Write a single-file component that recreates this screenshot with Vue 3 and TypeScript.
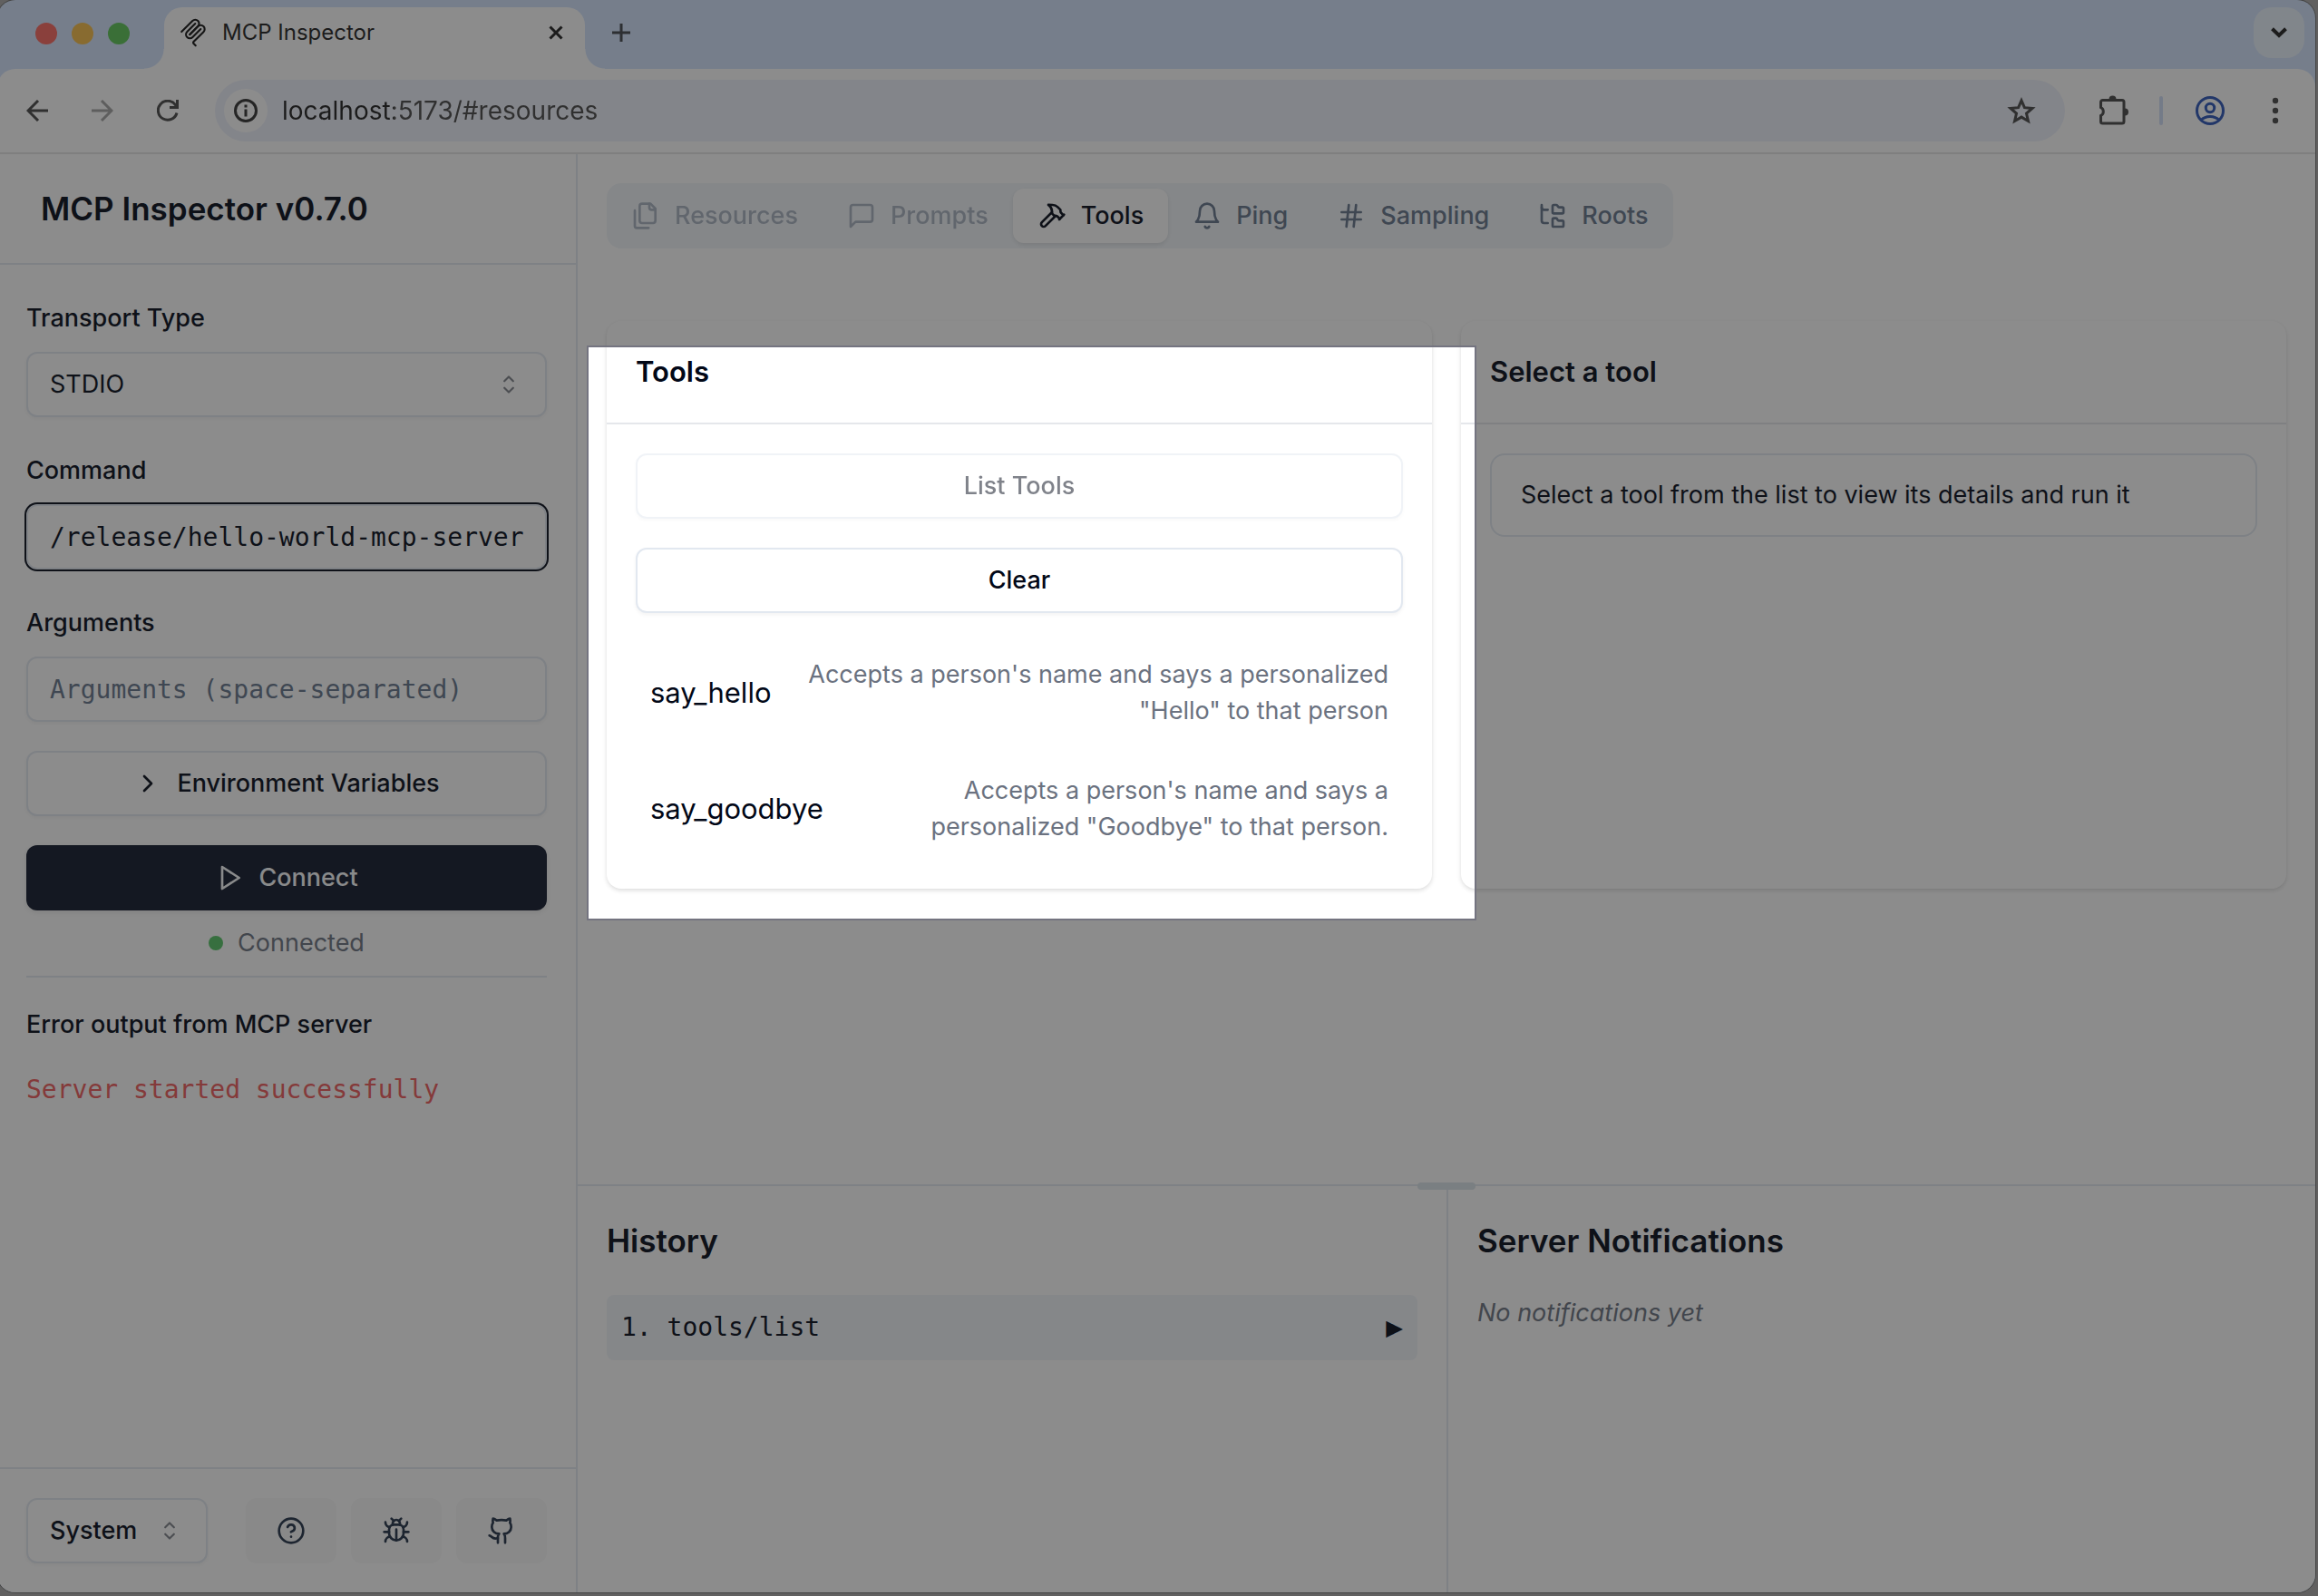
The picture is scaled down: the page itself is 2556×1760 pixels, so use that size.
<script setup lang="ts">
import { ref } from 'vue'

const icons: Record<string, string[]> = {
  files: [
    'M20 7h-3a2 2 0 0 1-2-2V2',
    'M9 18a2 2 0 0 1-2-2V4a2 2 0 0 1 2-2h7l4 4v10a2 2 0 0 1-2 2Z',
    'M3 7.6v12.8A1.6 1.6 0 0 0 4.6 22h9.8',
  ],
  message: ['M21 15a2 2 0 0 1-2 2H7l-4 4V5a2 2 0 0 1 2-2h14a2 2 0 0 1 2 2z'],
  hammer: [
    'm15 12-8.373 8.373a1 1 0 1 1-3-3L12 9',
    'm18 15 4-4',
    'm21.5 11.5-1.914-1.914A2 2 0 0 1 19 8.172V7l-2.26-2.26a6 6 0 0 0-4.202-1.756L9 2.96l.92.82A6.18 6.18 0 0 1 12 8.4V10l2 2h1.172a2 2 0 0 1 1.414.586L18.5 14.5',
  ],
  bell: ['M6 8a6 6 0 0 1 12 0c0 7 3 9 3 9H3s3-2 3-9', 'M10.3 21a1.94 1.94 0 0 0 3.4 0'],
  hash: ['M4 9h16', 'M4 15h16', 'M10 3 8 21', 'M16 3l-2 18'],
  tree: [
    'M20 10a1 1 0 0 0 1-1V6a1 1 0 0 0-1-1h-2.5a1 1 0 0 1-.8-.4l-.9-1.2A1 1 0 0 0 15 3h-2a1 1 0 0 0-1 1v5a1 1 0 0 0 1 1Z',
    'M20 21a1 1 0 0 0 1-1v-3a1 1 0 0 0-1-1h-2.9a1 1 0 0 1-.88-.55l-.42-.85a1 1 0 0 0-.92-.6H13a1 1 0 0 0-1 1v5a1 1 0 0 0 1 1Z',
    'M3 5a2 2 0 0 0 2 2h3',
    'M3 3v13a2 2 0 0 0 2 2h3',
  ],
  help: [
    'M12 2a10 10 0 1 0 0 20a10 10 0 1 0 0-20Z',
    'M9.09 9a3 3 0 0 1 5.83 1c0 2-3 3-3 3',
    'M12 17h.01',
  ],
  bug: [
    'm8 2 1.88 1.88',
    'M14.12 3.88 16 2',
    'M9 7.13v-1a3.003 3.003 0 1 1 6 0v1',
    'M12 20c-3.3 0-6-2.7-6-6v-3a4 4 0 0 1 4-4h4a4 4 0 0 1 4 4v3c0 3.3-2.7 6-6 6',
    'M12 20v-9',
    'M6.53 9C4.6 8.8 3 7.1 3 5',
    'M6 13H2',
    'M3 21c0-2.1 1.7-3.9 3.8-4',
    'M20.97 5c0 2.1-1.6 3.8-3.5 4',
    'M22 13h-4',
    'M17.2 17c2.1.1 3.8 1.9 3.8 4',
  ],
  github: [
    'M15 22v-4a4.8 4.8 0 0 0-1-3.5c3 0 6-2 6-5.5.08-1.25-.27-2.48-1-3.5.28-1.15.28-2.35 0-3.5 0 0-1 0-3 1.5-2.64-.5-5.36-.5-8 0C6 2 5 2 5 2c-.3 1.15-.3 2.35 0 3.5A5.403 5.403 0 0 0 4 9c0 3.5 3 5.5 6 5.5-.39.49-.68 1.05-.85 1.65-.17.6-.22 1.23-.15 1.85v4',
    'M9 18c-4.51 2-5-2-7-2',
  ],
}

interface Tab {
  label: string
  icon: string
  disabled: boolean
}
const tabs: Tab[] = [
  { label: 'Resources', icon: 'files', disabled: true },
  { label: 'Prompts', icon: 'message', disabled: true },
  { label: 'Tools', icon: 'hammer', disabled: false },
  { label: 'Ping', icon: 'bell', disabled: false },
  { label: 'Sampling', icon: 'hash', disabled: false },
  { label: 'Roots', icon: 'tree', disabled: false },
]
const activeTab = ref('Tools')

const tools = [
  { name: 'say_hello', description: 'Accepts a person\'s name and says a personalized "Hello" to that person' },
  { name: 'say_goodbye', description: 'Accepts a person\'s name and says a personalized "Goodbye" to that person.' },
]

const links = [
  { icon: 'help', label: 'Help' },
  { icon: 'bug', label: 'Debugging guide' },
  { icon: 'github', label: 'Report an issue' },
]

const url = ref('localhost:5173/#resources')
const transport = ref('STDIO')
const command = ref('/release/hello-world-mcp-server')
const args = ref('')
const theme = ref('System')
</script>

<template>
  <div class="desktop">
    <div class="window">
      <header class="tabstrip">
        <div class="lights">
          <span class="light red"></span>
          <span class="light yellow"></span>
          <span class="light green"></span>
        </div>
        <div class="browser-tab">
          <svg class="favicon" viewBox="0 0 180 180" fill="none" stroke="#111" stroke-width="12" stroke-linecap="round">
            <path d="M18 84.8528L85.8822 16.9706C95.2548 7.59798 110.451 7.59798 119.823 16.9706C129.196 26.3431 129.196 41.5391 119.823 50.9117L68.5581 102.177" />
            <path d="M69.2652 101.47L119.823 50.9117C129.196 41.5391 144.392 41.5391 153.765 50.9117L154.118 51.2652C163.491 60.6378 163.491 75.8338 154.118 85.2063L92.7248 146.6C89.6006 149.724 89.6006 154.789 92.7248 157.913L105.331 170.52" />
            <path d="M102.853 33.9411L52.6482 84.1457C43.2756 93.5183 43.2756 108.714 52.6482 118.087C62.0208 127.459 77.2167 127.459 86.5893 118.087L136.794 67.8822" />
          </svg>
          <span class="browser-title">MCP Inspector</span>
          <button class="bare" aria-label="Close tab">
            <svg width="16" height="16" viewBox="0 0 16 16" fill="none" stroke="#1f1f1f" stroke-width="3"><path d="M1.5 1.5l13 13M14.5 1.5l-13 13" /></svg>
          </button>
        </div>
        <button class="bare new-tab" aria-label="New tab">
          <svg width="20" height="20" viewBox="0 0 20 20" fill="none" stroke="#41444a" stroke-width="3"><path d="M10 0v20M0 10h20" /></svg>
        </button>
        <button class="bare tab-search" aria-label="Search tabs">
          <svg width="18" height="12" viewBox="0 0 18 12" fill="none" stroke="#1f1f1f" stroke-width="4"><path d="M1.5 1.8 9 9l7.5-7.2" /></svg>
        </button>
      </header>

      <div class="toolbar">
        <button class="bare nav" aria-label="Back">
          <svg width="24" height="24" viewBox="0 0 24 24" fill="none" stroke="#474747" stroke-width="3"><path d="M24 12H2M13 1 2 12l11 11" /></svg>
        </button>
        <button class="bare nav" aria-label="Forward" disabled>
          <svg width="24" height="24" viewBox="0 0 24 24" fill="none" stroke="#a3a3a3" stroke-width="3"><path d="M0 12h22M11 1l11 11-11 11" /></svg>
        </button>
        <button class="bare nav" aria-label="Reload">
          <svg width="24" height="24" viewBox="0 0 24 24" fill="none" stroke="#474747" stroke-width="3"><path d="M22 14.5A10.5 10.5 0 1 1 20.3 5.5L22 8M22.5 0v8.500H14" /></svg>
        </button>
        <div class="omnibox">
          <button class="bare site-info" aria-label="Site information">
            <svg width="26" height="26" viewBox="0 0 26 26" fill="none" stroke="#303030" stroke-width="3"><circle cx="13" cy="13" r="11.500" /><path d="M13 11.500v8M13 6.500v3" /></svg>
          </button>
          <input v-model="url" class="url" type="text" aria-label="Address" />
          <button class="bare" aria-label="Bookmark">
            <svg width="32" height="30" viewBox="0 0 32 30" fill="none" stroke="#474747" stroke-width="3"><path d="M16 3.800l3.400 7.900 8.600.75-6.500 5.650 1.950 8.400L16 22.100 8.550 26.500l1.950-8.400L4 12.450l8.600-.75Z" /></svg>
          </button>
        </div>
        <div class="actions">
          <button class="bare" aria-label="Extensions">
            <svg width="32" height="34" viewBox="0 0 32 34" fill="none" stroke="#474747" stroke-width="3">
              <path d="M3.500 5.500H25a2 2 0 0 1 2 2V29a2 2 0 0 1-2 2H3.500a2 2 0 0 1-2-2v-6.500a5 5 0 0 0 0-9V7.500a2 2 0 0 1 2-2Z" />
              <path d="M10.500 4.500a4 4 0 0 1 8 0ZM28 14.500a4 4 0 0 1 0 8Z" fill="#474747" stroke="none" />
            </svg>
          </button>
          <span class="divider"></span>
          <button class="bare" aria-label="Profile">
            <svg width="32" height="32" viewBox="0 0 32 32" fill="none" stroke="#2a54b8" stroke-width="3"><circle cx="16" cy="16" r="14.500" /><circle cx="16" cy="13" r="4.700" /><path d="M6 26.500c5-5.500 15-5.500 20 0" /></svg>
          </button>
          <button class="bare" aria-label="Menu">
            <svg width="8" height="30" viewBox="0 0 8 30" fill="#474747"><circle cx="4" cy="4" r="3.200" /><circle cx="4" cy="15" r="3.200" /><circle cx="4" cy="26" r="3.200" /></svg>
          </button>
        </div>
      </div>

      <div class="page">
        <aside class="sidebar">
          <h1 class="brand">MCP Inspector v0.7.0</h1>
          <form class="config" @submit.prevent>
            <div class="field">
              <label for="transport">Transport Type</label>
              <div class="select">
                <select id="transport" v-model="transport"><option>STDIO</option><option>SSE</option></select>
                <svg class="caret" viewBox="0 0 15 15"><path d="M5.250 5.750 7.500 3.500 9.750 5.750M5.250 9.250 7.500 11.500 9.750 9.250" /></svg>
              </div>
            </div>
            <div class="field">
              <label for="command">Command</label>
              <input id="command" v-model="command" class="input focused" type="text" />
            </div>
            <div class="field">
              <label for="arguments">Arguments</label>
              <input id="arguments" v-model="args" class="input" type="text" placeholder="Arguments (space-separated)" />
            </div>
            <button class="btn outline" type="button">
              <svg class="icon" viewBox="0 0 24 24"><path d="m9 18 6-6-6-6" /></svg>
              Environment Variables
            </button>
            <div class="connection">
              <button class="btn primary" type="submit">
                <svg class="icon" viewBox="0 0 24 24"><path d="M6 3l14 9-14 9Z" /></svg>
                Connect
              </button>
              <div class="status"><span class="dot"></span>Connected</div>
              <hr />
            </div>
            <h2 class="error-title">Error output from MCP server</h2>
            <div class="error-line">Server started successfully</div>
          </form>
          <footer class="sidebar-footer">
            <div class="select theme">
              <select v-model="theme" aria-label="Theme"><option>System</option><option>Light</option><option>Dark</option></select>
              <svg class="caret" viewBox="0 0 15 15"><path d="M5.250 5.750 7.500 3.500 9.750 5.750M5.250 9.250 7.500 11.500 9.750 9.250" /></svg>
            </div>
            <div class="links">
              <a v-for="link in links" :key="link.icon" href="#" class="link" :aria-label="link.label">
                <svg class="icon" viewBox="0 0 24 24"><path v-for="d in icons[link.icon]" :key="d" :d="d" /></svg>
              </a>
            </div>
          </footer>
        </aside>

        <main class="main">
          <section class="upper">
            <nav class="tabs" role="tablist">
              <button
                v-for="tab in tabs"
                :key="tab.label"
                class="tab"
                :class="{ active: tab.label === activeTab }"
                role="tab"
                :aria-selected="tab.label === activeTab"
                :disabled="tab.disabled"
                @click="activeTab = tab.label"
              >
                <svg class="icon" viewBox="0 0 24 24"><path v-for="d in icons[tab.icon]" :key="d" :d="d" /></svg>
                {{ tab.label }}
              </button>
            </nav>

            <div class="cards">
              <article class="card">
                <h3>Tools</h3>
                <div class="card-body">
                  <button class="btn outline" disabled>List Tools</button>
                  <button class="btn outline clear">Clear</button>
                  <ul class="tool-list">
                    <li v-for="tool in tools" :key="tool.name">
                      <span class="tool-name">{{ tool.name }}</span>
                      <span class="tool-desc">{{ tool.description }}</span>
                    </li>
                  </ul>
                </div>
                <div class="spotlight" aria-hidden="true"></div>
              </article>
              <article class="card">
                <h3>Select a tool</h3>
                <div class="card-body">
                  <p class="alert">Select a tool from the list to view its details and run it</p>
                </div>
              </article>
            </div>
          </section>

          <section class="lower">
            <span class="handle"></span>
            <div class="pane">
              <h2>History</h2>
              <button class="entry"><span>1. tools/list</span><span class="expand">▶</span></button>
            </div>
            <div class="pane notifications">
              <h2>Server Notifications</h2>
              <p class="empty">No notifications yet</p>
            </div>
          </section>
        </main>
      </div>
    </div>
  </div>
</template>

<style>
body {
  margin: 0;
  overflow: hidden;
}
</style>

<style scoped>
* {
  box-sizing: border-box;
}
.desktop {
  --fg: #020817;
  --muted: #64748b;
  --border: #e2e8f0;
  --sm: 27px;
  --md: 31px;
  --lg: 35px;
  --mono: 'DejaVu Sans Mono', monospace;
  display: flex;
  min-height: 100vh;
  padding: 0 3px 4px 0;
  overflow: hidden;
  background: #a8a6a6;
  color: var(--fg);
  font-family: Inter, 'Liberation Sans', sans-serif;
  font-size: var(--sm);
  line-height: 40px;
}
.window {
  flex: 1;
  display: flex;
  flex-direction: column;
  min-width: 0;
  margin-left: -3px;
  border-radius: 20px;
  background: #d3e3fd;
  box-shadow: 0 0 0 1px #707070;
}
h1, h2, h3, p, ul {
  margin: 0;
  padding: 0;
}
button, input, select {
  font: inherit;
  color: inherit;
}
.bare {
  display: flex;
  align-items: center;
  justify-content: center;
  padding: 0;
  border: 0;
  background: none;
}

/* browser chrome */
.tabstrip {
  display: flex;
  align-items: flex-start;
  height: 76px;
  padding: 8px 12px 0 42px;
}
.lights {
  display: flex;
  align-items: center;
  gap: 16px;
  width: 142px;
  height: 58px;
}
.light {
  width: 24px;
  height: 24px;
  border-radius: 50%;
}
.red { background: #fa675e; }
.yellow { background: #f6bd46; }
.green { background: #5bc454; }
.browser-tab {
  position: relative;
  display: flex;
  align-items: center;
  width: 464px;
  height: 68px;
  padding: 0 24px 12px 16px;
  border-radius: 20px 20px 0 0;
  background: #fff;
}
.browser-tab::before,
.browser-tab::after {
  content: '';
  position: absolute;
  bottom: 0;
  width: 22px;
  height: 22px;
}
.browser-tab::before {
  right: 100%;
  background: radial-gradient(circle at 0 0, transparent 21px, #fff 22px);
}
.browser-tab::after {
  left: 100%;
  background: radial-gradient(circle at 100% 0, transparent 21px, #fff 22px);
}
.favicon {
  width: 32px;
  height: 32px;
}
.browser-title {
  flex: 1;
  margin-left: 16px;
  color: #1f1f1f;
  font-size: 24px;
}
.new-tab {
  height: 56px;
  margin-left: 30px;
}
.tab-search {
  width: 56px;
  height: 56px;
  margin-left: auto;
  border-radius: 20px;
  background: #e9f2fc;
}
.toolbar {
  display: flex;
  align-items: center;
  height: 94px;
  padding: 0 40px 0 32px;
  border-bottom: 2px solid #e4e4e4;
  border-radius: 20px 20px 0 0;
  background: #fff;
}
.nav {
  width: 24px;
  margin-right: 48px;
}
.omnibox {
  display: flex;
  flex: 1;
  align-items: center;
  height: 68px;
  margin-left: -8px;
  padding: 0 32px 0 10px;
  border-radius: 34px;
  background: #edf0fa;
}
.site-info {
  width: 48px;
  height: 48px;
  border-radius: 50%;
  background: #fff;
}
.url {
  flex: 1;
  min-width: 0;
  margin-left: 16px;
  padding: 0;
  border: 0;
  outline: 0;
  background: linear-gradient(90deg, #1f1f1f 123px, #474747 123px);
  -webkit-background-clip: text;
  background-clip: text;
  color: transparent;
  font-size: 28px;
}
.actions {
  display: flex;
  align-items: center;
  gap: 34px;
  margin-left: 38px;
}
.actions .bare:last-child {
  margin-left: 18px;
}
.divider {
  width: 4px;
  height: 32px;
  margin-right: 2px;
  border-radius: 2px;
  background: #cfdcf6;
}

/* page */
.page {
  flex: 1;
  display: flex;
  border-radius: 0 0 20px 20px;
  background: #fff;
}
.sidebar {
  display: flex;
  flex: 0 0 640px;
  flex-direction: column;
  border-right: 2px solid var(--border);
}
.brand {
  padding: 36px 48px;
  border-bottom: 2px solid var(--border);
  font-size: var(--lg);
  font-weight: 600;
  line-height: 48px;
}
.config {
  display: flex;
  flex: 1;
  flex-direction: column;
  gap: 32px;
  padding: 32px;
}
.field {
  display: flex;
  flex-direction: column;
  gap: 16px;
}
.field label {
  padding-top: 6px;
  font-weight: 500;
  line-height: 42px;
}
.select {
  position: relative;
}
.select select {
  width: 100%;
  height: 72px;
  padding: 0 24px;
  border: 2px solid var(--border);
  border-radius: 12px;
  background: #fff;
  box-shadow: 0 2px 4px rgba(0, 0, 0, 0.05);
  appearance: none;
}
.caret {
  position: absolute;
  top: 20px;
  right: 26px;
  width: 32px;
  height: 32px;
  fill: none;
  stroke: var(--fg);
  stroke-linecap: round;
  stroke-linejoin: round;
  opacity: 0.5;
  pointer-events: none;
}
.input {
  width: 100%;
  height: 72px;
  padding: 0 24px;
  border: 2px solid var(--border);
  border-radius: 12px;
  outline: 0;
  background: #fff;
  box-shadow: 0 2px 4px rgba(0, 0, 0, 0.05);
  font-family: var(--mono);
  font-size: 28px;
}
.input.focused {
  box-shadow: 0 0 0 2px var(--fg);
}
.input::placeholder {
  color: var(--muted);
  opacity: 1;
}
.icon {
  flex: none;
  width: 32px;
  height: 32px;
  fill: none;
  stroke: currentColor;
  stroke-width: 2;
  stroke-linecap: round;
  stroke-linejoin: round;
}
.btn {
  display: flex;
  align-items: center;
  justify-content: center;
  gap: 16px;
  width: 100%;
  height: 72px;
  padding: 0 32px;
  border: 2px solid var(--border);
  border-radius: 12px;
  background: #fff;
  box-shadow: 0 2px 4px rgba(0, 0, 0, 0.05);
  font-weight: 500;
}
.btn:disabled {
  opacity: 0.5;
}
.btn.primary {
  border: 0;
  background: #0f172a;
  box-shadow: 0 2px 6px rgba(0, 0, 0, 0.1);
  color: #f8fafc;
}
.connection {
  display: flex;
  flex-direction: column;
  gap: 16px;
}
.status {
  display: flex;
  align-items: center;
  justify-content: center;
  gap: 16px;
  color: #6b7280;
}
.dot {
  width: 16px;
  height: 16px;
  border-radius: 50%;
  background: #55c565;
}
hr {
  width: 100%;
  height: 2px;
  margin: 0;
  border: 0;
  background: var(--border);
}
.error-title {
  font-size: var(--sm);
  font-weight: 500;
}
.error-line {
  color: #ef5a5a;
  font-family: var(--mono);
  font-size: 28px;
}
.sidebar-footer {
  display: flex;
  align-items: center;
  justify-content: space-between;
  padding: 32px;
  border-top: 2px solid var(--border);
}
.theme {
  width: 200px;
}
.theme select {
  font-weight: 500;
}
.links {
  display: flex;
  gap: 16px;
}
.link {
  display: flex;
  align-items: center;
  justify-content: center;
  width: 100px;
  height: 72px;
  border-radius: 12px;
  background: #f8f8f8;
  color: #213047;
}
.main {
  display: flex;
  flex: 1;
  flex-direction: column;
  min-width: 0;
}
.upper {
  flex: 1;
  padding: 32px;
}
.tabs {
  display: inline-flex;
  align-items: center;
  height: 72px;
  border-radius: 16px;
  background: #f1f5f9;
}
.tab {
  display: flex;
  align-items: center;
  gap: 16px;
  height: 60px;
  padding: 0 27px;
  border: 0;
  border-radius: 12px;
  background: none;
  color: var(--muted);
  font-weight: 500;
}
.tab:disabled {
  opacity: 0.5;
}
.tab.active {
  background: #fff;
  box-shadow: 0 2px 5px rgba(0, 0, 0, 0.1);
  color: var(--fg);
}
.cards {
  display: grid;
  grid-template-columns: 1fr 1fr;
  gap: 32px;
  margin-top: 80px;
}
.card {
  position: relative;
  min-width: 0;
  border-radius: 16px;
  background: #fff;
  box-shadow: 0 2px 5px rgba(0, 0, 0, 0.14);
}
.card h3 {
  padding: 32px;
  border-bottom: 2px solid #e5e7eb;
  font-size: var(--md);
  font-weight: 600;
  line-height: 48px;
}
.card-body {
  padding: 32px;
}
.clear {
  margin-top: 32px;
}
.tool-list {
  display: flex;
  flex-direction: column;
  gap: 16px;
  margin-top: 32px;
  list-style: none;
}
.tool-list li {
  display: flex;
  align-items: center;
  justify-content: space-between;
  padding: 16px;
}
.tool-name {
  font-size: var(--md);
}
.tool-desc {
  color: #6b7280;
  text-align: right;
}
.alert {
  padding: 24px 32px;
  border: 2px solid var(--border);
  border-radius: 16px;
}
/* dims everything except the tools panel */
.spotlight {
  position: absolute;
  z-index: 10;
  inset: 27px -49px -35px -22px;
  border: 2px solid #747480;
  box-shadow: 0 0 0 4000px rgba(25, 25, 25, 0.5);
  pointer-events: none;
}
.lower {
  position: relative;
  display: grid;
  grid-template-columns: 1fr 1fr;
  height: 450px;
  border-top: 2px solid var(--border);
}
.handle {
  position: absolute;
  top: -4px;
  left: 50%;
  width: 64px;
  height: 8px;
  margin-left: -32px;
  border-radius: 4px;
  background: #dbe4ea;
}
.pane {
  padding: 32px;
}
.notifications {
  border-left: 2px solid var(--border);
}
.pane h2 {
  margin-bottom: 32px;
  font-size: var(--lg);
  font-weight: 600;
  line-height: 56px;
}
.entry {
  display: flex;
  justify-content: space-between;
  width: 100%;
  padding: 16px;
  border: 0;
  border-radius: 8px;
  background: #f1f5f9;
  font-family: var(--mono);
  font-size: 28px;
  line-height: 40px;
}
.expand {
  font-size: 31px;
  line-height: 38px;
}
.empty {
  color: #6b7280;
  font-style: italic;
}
</style>
